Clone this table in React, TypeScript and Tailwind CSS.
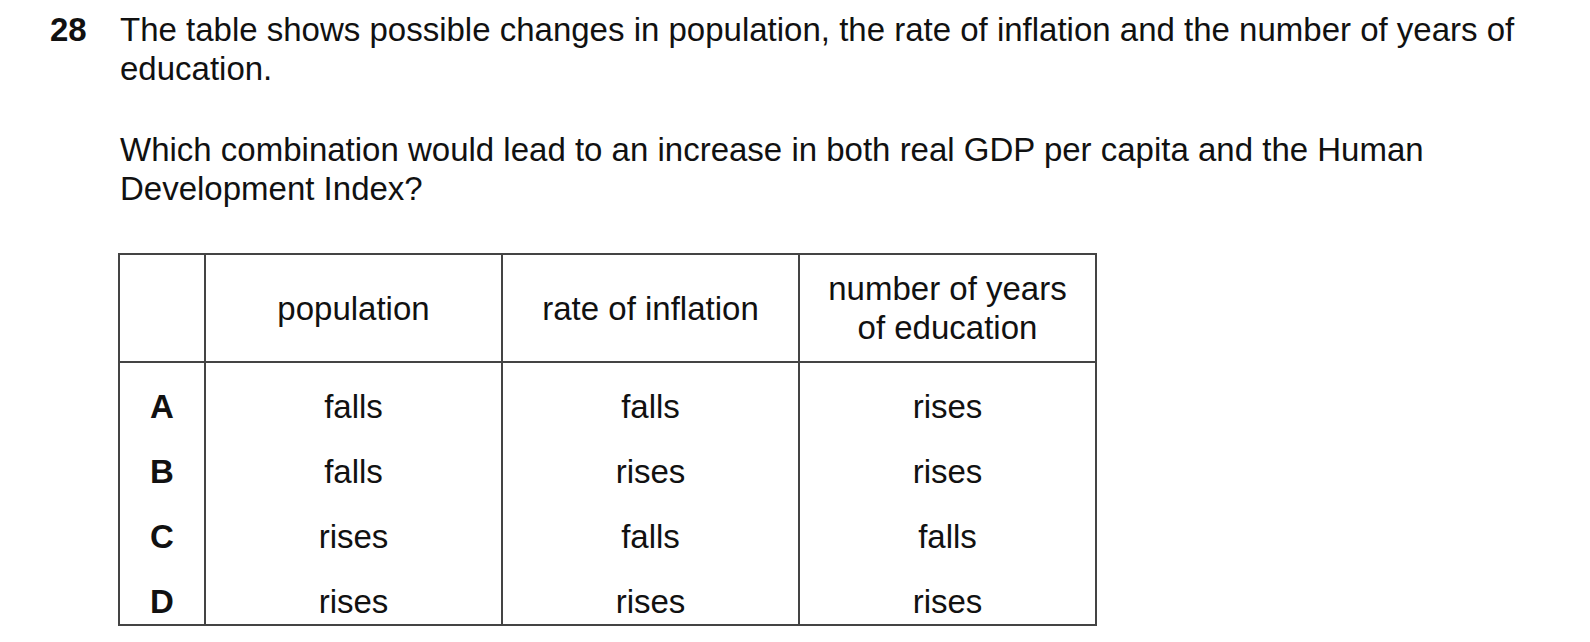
import React from "react";

const rows = [
  ["A", "falls", "falls", "rises"],
  ["B", "falls", "rises", "rises"],
  ["C", "rises", "falls", "falls"],
  ["D", "rises", "rises", "rises"],
];

export default function App() {
  return (
    <div
      className="w-[1590px] h-[642px] bg-white text-[#111] overflow-hidden"
      style={{ fontFamily: '"Liberation Sans", Arial, sans-serif' }}
    >
      <div className="flex pt-[10px] text-[33px] leading-[39px]">
        <div className="w-[120px] shrink-0 pl-[50px] font-bold">28</div>
        <div className="flex-1">
          <p>
            The table shows possible changes in population, the rate of inflation and the number of years of
            <br />
            education.
          </p>
          <p className="mt-[42px]">
            Which combination would lead to an increase in both real GDP per capita and the Human
            <br />
            Development Index?
          </p>

          <div className="mt-[45px] ml-[-2px] w-[979px] border-2 border-[#444]">
            <div className="flex h-[108px] border-b-2 border-[#444]">
              <div className="w-[84px]" />
              <div className="w-[297px] border-l-2 border-[#444] flex items-center justify-center">
                population
              </div>
              <div className="w-[297px] border-l-2 border-[#444] flex items-center justify-center">
                rate of inflation
              </div>
              <div className="flex-1 border-l-2 border-[#444] flex items-center justify-center text-center leading-[39px]">
                number of years
                <br />
                of education
              </div>
            </div>
            <div className="flex pt-[11px]">
              <div className="w-[84px] flex flex-col">
                {rows.map((r, i) => (
                  <div
                    key={r[0]}
                    className={`font-bold text-center leading-[65px] ${i === 3 ? "h-[55px]" : "h-[65px]"}`}
                  >
                    {r[0]}
                  </div>
                ))}
              </div>
              {[1, 2, 3].map((c) => (
                <div
                  key={c}
                  className={`${c === 3 ? "flex-1" : "w-[297px]"} border-l-2 border-[#444] flex flex-col mt-[-11px] pt-[11px]`}
                >
                  {rows.map((r, i) => (
                    <div
                      key={r[0]}
                      className={`text-center leading-[65px] ${i === 3 ? "h-[55px]" : "h-[65px]"}`}
                    >
                      {r[c]}
                    </div>
                  ))}
                </div>
              ))}
            </div>
          </div>
        </div>
      </div>
    </div>
  );
}
